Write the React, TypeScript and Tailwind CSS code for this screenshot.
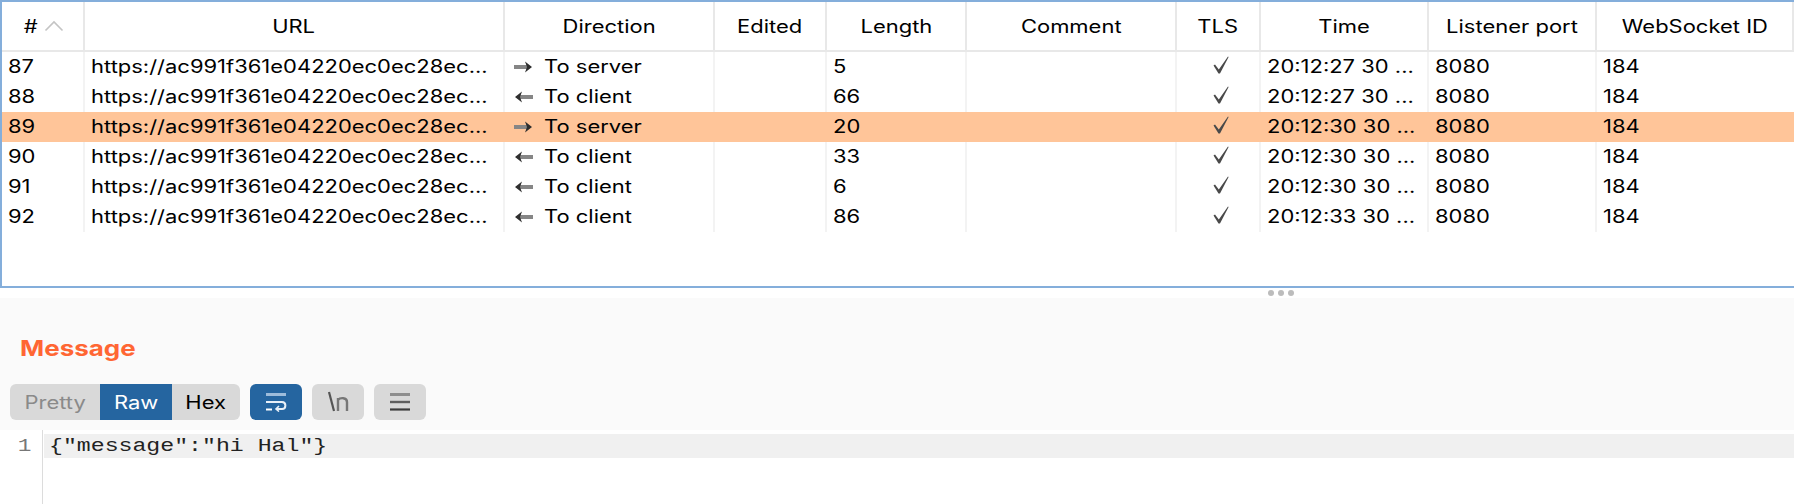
import type { ReactNode } from "react";

const headers = ["URL", "Direction", "Edited", "Length", "Comment", "TLS", "Time", "Listener port", "WebSocket ID"];
const rows = [
  { id: 87, dir: "server", len: 5, time: "20:12:27 30 ..." },
  { id: 88, dir: "client", len: 66, time: "20:12:27 30 ..." },
  { id: 89, dir: "server", len: 20, time: "20:12:30 30 ...", selected: true },
  { id: 90, dir: "client", len: 33, time: "20:12:30 30 ..." },
  { id: 91, dir: "client", len: 6, time: "20:12:30 30 ..." },
  { id: 92, dir: "client", len: 86, time: "20:12:33 30 ..." },
];
const grid = "grid grid-cols-[83px_420px_210px_112px_140px_210px_84px_168px_168px_197px]";

function L({ children }: { children: ReactNode }) {
  return <span className="inline-block origin-left scale-x-[1.22] whitespace-nowrap">{children}</span>;
}
function C({ children }: { children: ReactNode }) {
  return <span className="inline-block origin-center scale-x-[1.22] whitespace-nowrap">{children}</span>;
}

function Arrow({ left }: { left: boolean }) {
  return (
    <svg width="19" height="14" viewBox="0 0 19 14" className="shrink-0">
      <g transform={left ? "translate(19 0) scale(-1 1)" : undefined}>
        <rect x="0" y="5" width="14" height="4" fill="#868686" />
        <path d="M11 1.5 L18 7 L11 12.5 L13 7 Z" fill="#2e2e2e" />
      </g>
    </svg>
  );
}

function Check() {
  return (
    <svg width="20" height="20" viewBox="0 0 20 20" className="block -translate-y-[1.5px]">
      <path d="M2.5 10 L4 9 L7.8 14 L17 1 L17.6 1.4 L9 18 L7.5 18 Z" fill="#4a4a4a" />
    </svg>
  );
}

export default function App() {
  return (
    <div className="w-[1794px] h-[504px] flex flex-col bg-white text-black overflow-hidden font-['Inter','Liberation_Sans',sans-serif] text-[18px]">
      <div className="h-[288px] shrink-0 border-y-2 border-l-2 border-[#84aedb] overflow-hidden">
        <div className={`${grid} h-[50px] border-b-2 border-[#e8e8e8]`}>
          <div className="border-r-2 border-[#e8e8e8] flex items-center justify-center gap-[8px] pl-[4px]">
            <C>#</C>
            <svg width="20" height="12" viewBox="0 0 20 12">
              <path d="M1.5 10.5 L10 2 L18.5 10.5" fill="none" stroke="#c4c4c4" strokeWidth="1.6" />
            </svg>
          </div>
          {headers.map((h) => (
            <div key={h} className="border-r-2 border-[#e8e8e8] flex items-center justify-center">
              <C>{h}</C>
            </div>
          ))}
        </div>
        {rows.map((r) => {
          const cell = `border-r-2 pl-[6px] leading-[30px] ${r.selected ? "border-transparent" : "border-[#f3f3f3]"}`;
          return (
            <div key={r.id} className={`${grid} h-[30px] ${r.selected ? "bg-[#ffc599]" : ""}`}>
              <div className={cell}><L>{r.id}</L></div>
              <div className={cell}><L>https://ac991f361e04220ec0ec28ec...</L></div>
              <div className={`${cell} flex items-center gap-[11px] pl-[9px]`}>
                <Arrow left={r.dir === "client"} />
                <L>To {r.dir}</L>
              </div>
              <div className={cell}></div>
              <div className={cell}><L>{r.len}</L></div>
              <div className={cell}></div>
              <div className={`${cell} flex items-center justify-center`}>
                <Check />
              </div>
              <div className={cell}><L>{r.time}</L></div>
              <div className={cell}><L>8080</L></div>
              <div className="pl-[6px] leading-[30px]"><L>184</L></div>
            </div>
          );
        })}
      </div>

      <div className="h-[10px] shrink-0 flex items-center justify-center gap-[4px] pl-[768px]">
        <span className="w-[6px] h-[6px] rounded-full bg-[#bcbcbc]" />
        <span className="w-[6px] h-[6px] rounded-full bg-[#bcbcbc]" />
        <span className="w-[6px] h-[6px] rounded-full bg-[#bcbcbc]" />
      </div>

      <div className="h-[132px] shrink-0 bg-[#fafafa] flex flex-col px-[10px]">
        <h2 className="mt-[33px] ml-[10px] h-[34px] leading-[34px] text-[22px] font-bold text-[#ff6633]">
          <span className="inline-block origin-left scale-x-[1.18]">Message</span>
        </h2>
        <div className="mt-[19px] flex gap-[10px]">
          <div className="flex h-[36px] rounded-[6px] overflow-hidden bg-[#d9d9d9]">
            <span className="w-[90px] flex items-center justify-center text-[#8a8a8a]"><C>Pretty</C></span>
            <span className="w-[72px] flex items-center justify-center bg-[#2565a0] text-white"><C>Raw</C></span>
            <span className="w-[68px] flex items-center justify-center"><C>Hex</C></span>
          </div>
          <div className="w-[52px] h-[36px] rounded-[6px] bg-[#2565a0] flex items-center justify-center">
            <svg width="22" height="20" viewBox="0 0 22 20" fill="none">
              <path d="M1 2.5 H21" stroke="#9dbcdb" strokeWidth="3" />
              <path d="M1 10 H17 C21.5 10 21.5 17 17 17 H11" stroke="#e8f0f8" strokeWidth="2" />
              <path d="M14 14 L11 17 L14 19.5" stroke="#e8f0f8" strokeWidth="1.6" />
              <path d="M1 17.5 H7" stroke="#ffffff" strokeWidth="2" />
            </svg>
          </div>
          <div className="w-[52px] h-[36px] rounded-[6px] bg-[#d9d9d9] flex items-center justify-center">
            <svg width="24" height="22" viewBox="0 0 24 22" fill="none">
              <path d="M3 1 L8 20" stroke="#555" strokeWidth="2.2" />
              <path d="M12 20 V7 M12 9 C14 6.5 21 6 21 11 V20" stroke="#777" strokeWidth="2.4" />
            </svg>
          </div>
          <div className="w-[52px] h-[36px] rounded-[6px] bg-[#d9d9d9] flex items-center justify-center">
            <svg width="22" height="20" viewBox="0 0 22 20" fill="none">
              <path d="M1 2.5 H21" stroke="#8e8e8e" strokeWidth="3" />
              <path d="M1 10 H21" stroke="#5f5f5f" strokeWidth="2.4" />
              <path d="M1 17.5 H21" stroke="#3c3c3c" strokeWidth="2.2" />
            </svg>
          </div>
        </div>
      </div>

      <div className="flex-1 flex">
        <div className="w-[43px] shrink-0 border-r border-[#dcdcdc] pt-[4px] pr-[11px] text-right text-[#777] font-['Liberation_Mono',monospace] text-[19px] leading-[24px]">
          <span className="inline-block origin-right scale-x-[1.2]">1</span>
        </div>
        <div className="flex-1 pt-[4px] pl-[1px]">
          <div className="h-[24px] leading-[24px] bg-[#f0f0f0] pl-[5px] font-['Liberation_Mono',monospace] text-[19px] text-[#222]">
            <span className="inline-block origin-left scale-x-[1.22] whitespace-pre">{'{"message":"hi Hal"}'}</span>
          </div>
        </div>
      </div>
    </div>
  );
}
